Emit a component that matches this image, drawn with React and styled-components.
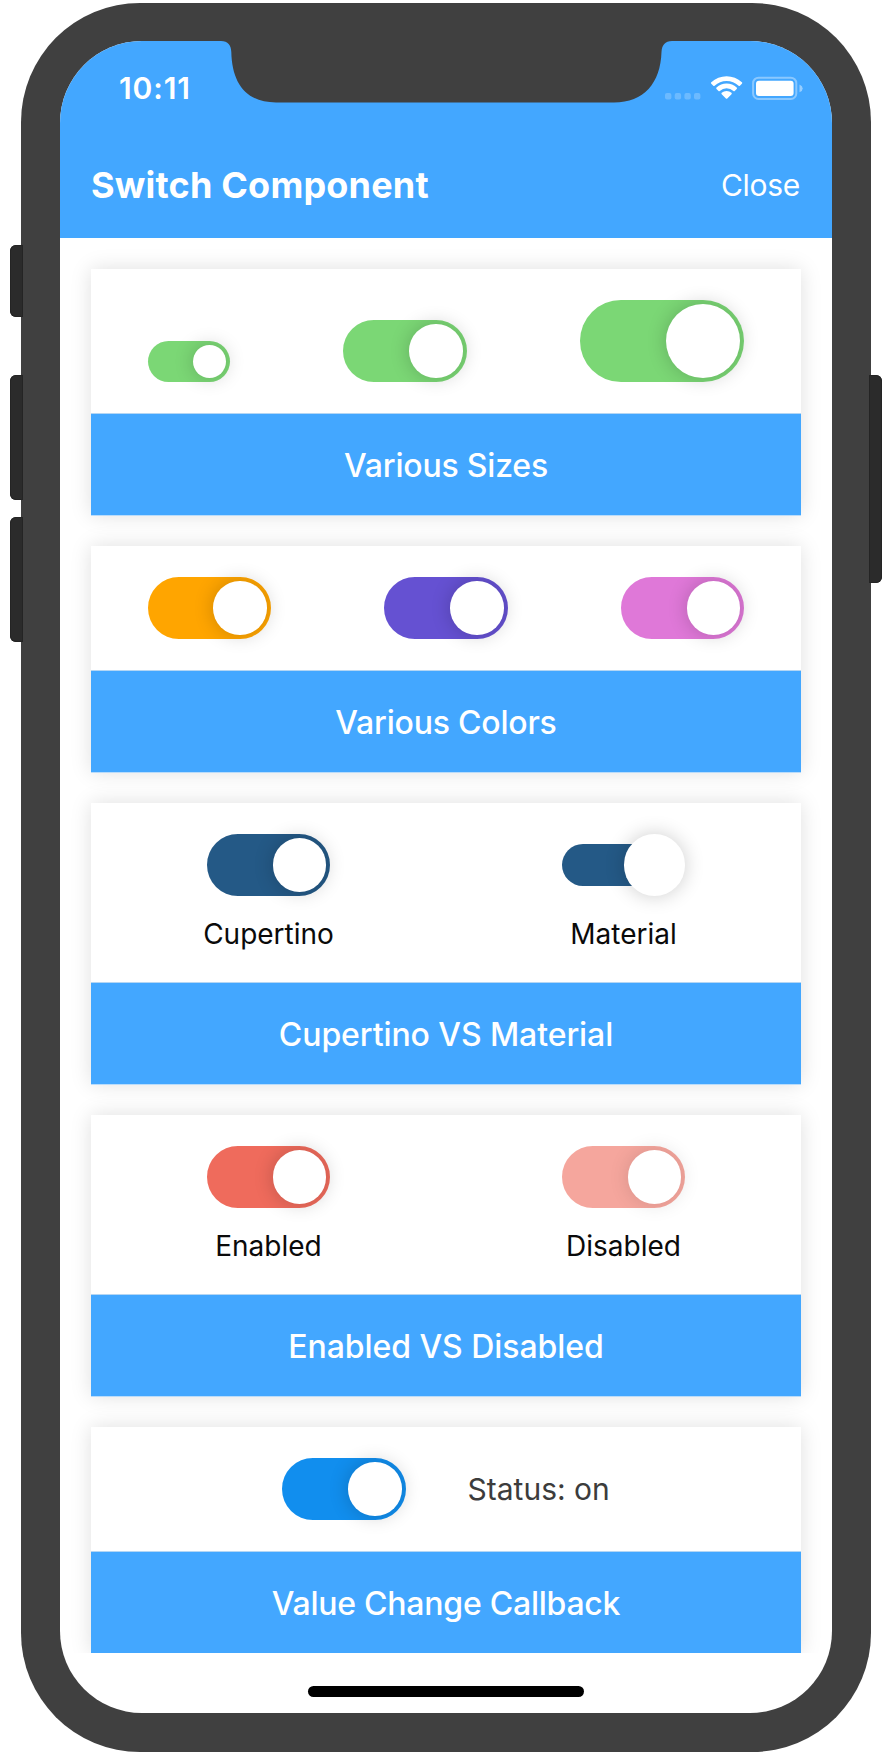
import React, { useState } from "react";
import styled, { createGlobalStyle } from "styled-components";

const GlobalStyle = createGlobalStyle`
  body {
    margin: 0;
    background: #fff;
    font-family: Inter, "Liberation Sans", sans-serif;
  }
  *, *::before, *::after { box-sizing: border-box; }
`;

const BLUE = "#43a7ff";

const Stage = styled.main`
  position: relative;
  width: 892px;
  height: 1754px;
  padding: 2.5px 21.5px 2.5px 21px;
  overflow: hidden;
`;

const SideButton = styled.i`
  position: absolute;
  top: ${(p) => p.$top}px;
  ${(p) => p.$side}: ${(p) => (p.$side === "left" ? 10 : 10.5)}px;
  width: 13px;
  height: ${(p) => p.$height}px;
  border-radius: ${(p) => (p.$side === "left" ? "6px 0 0 6px" : "0 6px 6px 0")};
  background: #2b2b2b;
  box-shadow: inset 0 0 0 1px #242424;
`;

const Bezel = styled.div`
  height: 1749px;
  padding: 38.5px 38.5px 38.7px 39px;
  border-radius: 119px;
  background: #404040;
`;

const Screen = styled.div`
  position: relative;
  height: 100%;
  display: flex;
  flex-direction: column;
  border-radius: 82px;
  background: #fff;
  overflow: hidden;
`;

const Notch = styled.svg`
  position: absolute;
  top: -1px;
  left: 158px;
  width: 460px;
  height: 64px;
`;

const Header = styled.header`
  flex: none;
  height: 197px;
  background: ${BLUE};
  color: #fff;
`;

const StatusBar = styled.div`
  height: 92px;
  padding: 32px 28px 0 59px;
  display: flex;
  align-items: flex-start;
  justify-content: space-between;
`;

const Clock = styled.span`
  font-size: 30px;
  line-height: 30px;
  font-weight: 600;
  letter-spacing: 0.9px;
`;

const StatusIcons = styled.svg`
  width: 140px;
  height: 26px;
  margin-top: 3px;
`;

const NavBar = styled.div`
  height: 104px;
  padding: 0 32px 0 31px;
  display: flex;
  align-items: center;
  justify-content: space-between;
`;

const Title = styled.h1`
  margin: 0;
  font-size: 36px;
  line-height: 44px;
  font-weight: 700;
  letter-spacing: 0.2px;
`;

const Close = styled.button`
  border: 0;
  padding: 0;
  background: none;
  color: inherit;
  font: 400 30px/40px Inter, sans-serif;
  letter-spacing: -0.3px;
`;

const Scroll = styled.div`
  height: 1415px;
  padding: 31px;
  display: flex;
  flex-direction: column;
  gap: 31px;
  overflow: hidden;
`;

const Card = styled.section`
  flex: none;
  background: #fff;
  box-shadow: 0 0 20px rgba(0, 0, 0, 0.13);
`;

const Demo = styled.div`
  height: ${(p) => p.$height}px;
  padding: 31px 0;
  border-bottom: 1px solid #b4d6f4;
  display: flex;
  justify-content: ${(p) => p.$justify || "space-around"};
  align-items: ${(p) => p.$align || "flex-start"};
  gap: ${(p) => p.$gap || 0}px;
`;

const Caption = styled.h2`
  margin: 0;
  height: 101px;
  padding-top: 1px;
  display: flex;
  align-items: center;
  justify-content: center;
  background: ${BLUE};
  box-shadow: 0 1px 0 #b9dcfb;
  color: #fff;
  font-size: 32px;
  font-weight: 500;
  letter-spacing: ${(p) => p.$track}px;
`;

const Column = styled.div`
  flex: 1;
  display: flex;
  flex-direction: column;
  align-items: center;
`;

const Label = styled.span`
  margin-top: 20px;
  font-size: 28px;
  line-height: 36px;
  color: #0a0a0a;
`;

const Status = styled.span`
  font-size: 30px;
  line-height: 40px;
  color: #3c3c3c;
`;

const Track = styled.button`
  flex: none;
  display: flex;
  align-items: center;
  justify-content: ${(p) => (p.$on ? "flex-end" : "flex-start")};
  width: ${(p) => p.$size * 2}px;
  height: ${(p) => p.$size}px;
  padding: ${(p) => (p.$material ? 0 : 4.1)}px;
  border: 0;
  border-radius: ${(p) => p.$size / 2}px;
  background: ${(p) => (p.$material ? "none" : p.$color)};
  position: relative;

  &::before {
    content: "";
    display: ${(p) => (p.$material ? "block" : "none")};
    position: absolute;
    inset: 10.3px 2px 10.3px 0;
    border-radius: 21px;
    background: ${(p) => p.$color};
  }
`;

const Knob = styled.span`
  position: relative;
  height: 100%;
  aspect-ratio: 1;
  border-radius: 50%;
  background: #fff;
  box-shadow: 0 0 20px rgba(0, 0, 0, ${(p) => (p.$faded ? 0.13 : 0.2)});
`;

const HomeIndicator = styled.div`
  width: 276px;
  height: 10.5px;
  margin: 33px auto 0;
  border-radius: 6px;
  background: #000;
`;

function Switch({ size = 61.8, color, material, disabled, label, onChange }) {
  const [on, setOn] = useState(true);
  const toggle = () => {
    setOn(!on);
    if (onChange) onChange(!on);
  };
  return (
    <Track
      type="button"
      role="switch"
      aria-checked={on}
      aria-label={label}
      disabled={disabled}
      onClick={toggle}
      $on={on}
      $size={size}
      $color={color}
      $material={material}
    >
      <Knob $faded={disabled} />
    </Track>
  );
}

export default function App() {
  const [status, setStatus] = useState(true);
  return (
    <>
      <GlobalStyle />
      <Stage>
        <Bezel>
          <Screen>
            <Header>
              <StatusBar>
                <Clock>10:11</Clock>
                <StatusIcons viewBox="0 0 140 26" fill="#fff">
                  <g opacity="0.22">
                    <rect x="1" y="17" width="6.4" height="6.4" rx="2" />
                    <rect x="10.7" y="17" width="6.4" height="6.4" rx="2" />
                    <rect x="20.4" y="17" width="6.4" height="6.4" rx="2" />
                    <rect x="30" y="17" width="6.4" height="6.4" rx="2" />
                  </g>
                  <g transform="translate(0.500 0.500)">
                    <path d="M46.8 7.2a1 1 0 0 1 0-1.4a22.4 22.4 0 0 1 30.6 0a1 1 0 0 1 0 1.400l-2 2a1 1 0 0 1-1.300 0a17.6 17.6 0 0 0-24 0a1 1 0 0 1-1.300 0z" />
                    <path d="M52 12.5a1 1 0 0 1 0-1.400a14.7 14.7 0 0 1 20.200 0a1 1 0 0 1 0 1.400l-2 2a1 1 0 0 1-1.300 0a10 10 0 0 0-13.600 0a1 1 0 0 1-1.300 0z" />
                    <path d="M57.2 17.700a1 1 0 0 1 0-1.400a7.300 7.300 0 0 1 9.800 0a1 1 0 0 1 0 1.400l-4.200 4.300a1 1 0 0 1-1.400 0z" />
                  </g>
                  <rect x="89.1" y="1.7" width="43.2" height="21.3" rx="5.5" fill="none" stroke="#fff" strokeWidth="2" opacity="0.38" />
                  <rect x="92" y="4.700" width="37.6" height="15.4" rx="3" />
                  <path d="M135.5 8.5q3.200 1.400 3.200 3.900t-3.200 3.900z" opacity="0.45" />
                </StatusIcons>
              </StatusBar>
              <NavBar>
                <Title>Switch Component</Title>
                <Close type="button">Close</Close>
              </NavBar>
            </Header>
            <Scroll>
              <Card>
                <Demo $height={145} $align="flex-end">
                  <Switch size={41.2} color="#7bd775" label="Small" />
                  <Switch color="#7bd775" label="Medium" />
                  <Switch size={82.3} color="#7bd775" label="Large" />
                </Demo>
                <Caption $track={-0.2}>Various Sizes</Caption>
              </Card>
              <Card>
                <Demo $height={125}>
                  <Switch color="#ffa500" label="Orange" />
                  <Switch color="#6551d2" label="Purple" />
                  <Switch color="#df78d8" label="Orchid" />
                </Demo>
                <Caption $track={-0.2}>Various Colors</Caption>
              </Card>
              <Card>
                <Demo $height={180}>
                  <Column>
                    <Switch color="#245986" label="Cupertino" />
                    <Label>Cupertino</Label>
                  </Column>
                  <Column>
                    <Switch color="#245986" material label="Material" />
                    <Label>Material</Label>
                  </Column>
                </Demo>
                <Caption $track={-0.08}>Cupertino VS Material</Caption>
              </Card>
              <Card>
                <Demo $height={180}>
                  <Column>
                    <Switch color="#ef6b5c" label="Enabled" />
                    <Label>Enabled</Label>
                  </Column>
                  <Column>
                    <Switch color="#f5a69d" disabled label="Disabled" />
                    <Label>Disabled</Label>
                  </Column>
                </Demo>
                <Caption $track={-0.05}>Enabled VS Disabled</Caption>
              </Card>
              <Card>
                <Demo $height={125} $justify="center" $align="center" $gap={61.8}>
                  <Switch color="#118eee" label="Status" onChange={setStatus} />
                  <Status>Status: {status ? "on" : "off"}</Status>
                </Demo>
                <Caption $track={-0.24}>Value Change Callback</Caption>
              </Card>
            </Scroll>
            <HomeIndicator />
            <Notch viewBox="0 0 460 64" fill="#404040">
              <path d="M0 0H460V1H454C447 1 444 5 443.500 12C442.500 43 426 62.500 396 62.500H58C28 62.500 14 43 13.300 12C13 5 10 1 3 1H0Z" />
            </Notch>
          </Screen>
        </Bezel>
        <SideButton $side="left" $top={245} $height={72} />
        <SideButton $side="left" $top={375} $height={125} />
        <SideButton $side="left" $top={517} $height={125} />
        <SideButton $side="right" $top={375} $height={208} />
      </Stage>
    </>
  );
}
